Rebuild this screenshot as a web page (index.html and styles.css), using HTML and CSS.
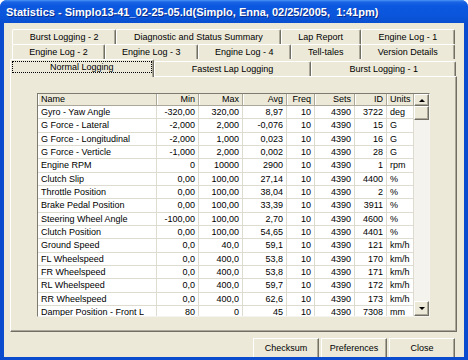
FILE: index.html
```html
<!DOCTYPE html>
<html>
<head>
    <meta charset="utf-8">
    <title>Statistics</title>
    <link rel="stylesheet" href="styles.css">
</head>
<body>
    <div class="window">
        <div class="titlebar">Statistics - Simplo13-41_02-25-05.ld(Simplo, Enna, 02/25/2005,&nbsp; 1:41pm)</div>

        <div class="client">
            <div class="tabs">
                <div class="tab-row back">
                    <div class="tab">Burst Logging - 2</div>
                    <div class="tab">Diagnostic and Status Summary</div>
                    <div class="tab">Lap Report</div>
                    <div class="tab">Engine Log - 1</div>
                </div>
                <div class="tab-row back">
                    <div class="tab">Engine Log - 2</div>
                    <div class="tab">Engine Log - 3</div>
                    <div class="tab">Engine Log - 4</div>
                    <div class="tab">Tell-tales</div>
                    <div class="tab">Version Details</div>
                </div>
                <div class="tab-row front">
                    <div class="tab selected"><span class="focus">Normal Logging</span></div>
                    <div class="tab">Fastest Lap Logging</div>
                    <div class="tab">Burst Logging - 1</div>
                </div>
            </div>

            <div class="panel">
                <div class="listview">
                    <div class="list-area">
                        <table class="stats">
                            <colgroup>
                                <col class="c-name"><col class="c-min"><col class="c-max"><col class="c-avg">
                                <col class="c-freq"><col class="c-sets"><col class="c-id"><col class="c-units">
                            </colgroup>
                            <thead>
                                <tr>
                                    <th class="txt">Name</th><th>Min</th><th>Max</th><th>Avg</th>
                                    <th>Freq</th><th>Sets</th><th>ID</th><th class="txt">Units</th>
                                </tr>
                            </thead>
                            <tbody>
                                <tr><td class="txt">Gyro - Yaw Angle</td><td>-320,00</td><td>320,00</td><td>8,97</td><td>10</td><td>4390</td><td>3722</td><td class="txt">deg</td></tr>
                                <tr><td class="txt">G Force - Lateral</td><td>-2,000</td><td>2,000</td><td>-0,076</td><td>10</td><td>4390</td><td>15</td><td class="txt">G</td></tr>
                                <tr><td class="txt">G Force - Longitudinal</td><td>-2,000</td><td>1,000</td><td>0,023</td><td>10</td><td>4390</td><td>16</td><td class="txt">G</td></tr>
                                <tr><td class="txt">G Force - Verticle</td><td>-1,000</td><td>2,000</td><td>0,002</td><td>10</td><td>4390</td><td>28</td><td class="txt">G</td></tr>
                                <tr><td class="txt">Engine RPM</td><td>0</td><td>10000</td><td>2900</td><td>10</td><td>4390</td><td>1</td><td class="txt">rpm</td></tr>
                                <tr><td class="txt">Clutch Slip</td><td>0,00</td><td>100,00</td><td>27,14</td><td>10</td><td>4390</td><td>4400</td><td class="txt">%</td></tr>
                                <tr><td class="txt">Throttle Position</td><td>0,00</td><td>100,00</td><td>38,04</td><td>10</td><td>4390</td><td>2</td><td class="txt">%</td></tr>
                                <tr><td class="txt">Brake Pedal Position</td><td>0,00</td><td>100,00</td><td>33,39</td><td>10</td><td>4390</td><td>3911</td><td class="txt">%</td></tr>
                                <tr><td class="txt">Steering Wheel Angle</td><td>-100,00</td><td>100,00</td><td>2,70</td><td>10</td><td>4390</td><td>4600</td><td class="txt">%</td></tr>
                                <tr><td class="txt">Clutch Position</td><td>0,00</td><td>100,00</td><td>54,65</td><td>10</td><td>4390</td><td>4401</td><td class="txt">%</td></tr>
                                <tr><td class="txt">Ground Speed</td><td>0,0</td><td>40,0</td><td>59,1</td><td>10</td><td>4390</td><td>121</td><td class="txt">km/h</td></tr>
                                <tr><td class="txt">FL Wheelspeed</td><td>0,0</td><td>400,0</td><td>53,8</td><td>10</td><td>4390</td><td>170</td><td class="txt">km/h</td></tr>
                                <tr><td class="txt">FR Wheelspeed</td><td>0,0</td><td>400,0</td><td>53,8</td><td>10</td><td>4390</td><td>171</td><td class="txt">km/h</td></tr>
                                <tr><td class="txt">RL Wheelspeed</td><td>0,0</td><td>400,0</td><td>59,7</td><td>10</td><td>4390</td><td>172</td><td class="txt">km/h</td></tr>
                                <tr><td class="txt">RR Wheelspeed</td><td>0,0</td><td>400,0</td><td>62,6</td><td>10</td><td>4390</td><td>173</td><td class="txt">km/h</td></tr>
                                <tr><td class="txt">Damper Position - Front L</td><td>80</td><td>0</td><td>45</td><td>10</td><td>4390</td><td>7308</td><td class="txt">mm</td></tr>
                            </tbody>
                        </table>
                    </div>
                    <div class="vscroll">
                        <div class="sb-btn"><span class="arrow up"></span></div>
                        <div class="sb-thumb"></div>
                        <div class="sb-track"></div>
                        <div class="sb-btn down"><span class="arrow dn"></span></div>
                    </div>
                </div>
            </div>

            <div class="buttons">
                <button class="btn">Checksum</button>
                <button class="btn">Preferences</button>
                <button class="btn">Close</button>
            </div>
        </div>
    </div>
</body>
</html>
```

FILE: styles.css
```css
body {
    margin: 0;
    background-color: #ffffff;
    font-family: "Liberation Sans", Arial, sans-serif;
    font-size: 9px;
    color: #000;
}

.window {
    width: 468px;
    height: 360px;
    box-sizing: border-box;
    padding: 0 4px 3px 4px;
    background-color: #0b4ccf;
    border-radius: 7px 7px 0 0;
    display: flex;
    flex-direction: column;
    overflow: hidden;
}

.titlebar {
    margin: 0 -4px;
    height: 23px;
    line-height: 24px;
    padding-left: 6px;
    background: linear-gradient(#4a97f6 0px, #1a63e4 2px, #0b58e0 6px, #0a55db 16px, #0a4fcf 23px);
    color: #fff;
    font-weight: bold;
    font-size: 11px;
    white-space: nowrap;
    text-shadow: 1px 1px 0 #0a2a8a;
}

.client {
    flex: 1;
    background-color: #ece9d8;
    overflow: hidden;
}

/* tab strip */
.tabs {
    margin: 6px 7px 0 6px;
}

.tab-row {
    display: flex;
    height: 15px;
}

.tab-row.back {
    margin: 0 2px;
}

.tab-row.front {
    height: 17px;
    margin-right: 1px;
    position: relative;
    z-index: 1;
}

.tab {
    flex: 1 1 auto;
    box-sizing: border-box;
    height: 15px;
    border-top: 1px solid #fff;
    border-left: 1px solid #fff;
    border-right: 1px solid #716f64;
    box-shadow: inset -1px 0 #aca899;
    border-radius: 2px 2px 0 0;
    text-align: center;
    line-height: 14px;
    white-space: nowrap;
    background-color: #ece9d8;
}

.front .tab {
    margin-top: 2px;
}

.front .tab.selected {
    margin-top: 0;
    height: 18px;
    padding: 1px 1px 0 1px;
}

.focus {
    display: block;
    height: 12px;
    line-height: 11px;
    box-sizing: border-box;
    border: 1px dotted #000;
}

/* page */
.panel {
    height: 256px;
    margin: 0 7px 0 6px;
    box-sizing: border-box;
    border-top: 1px solid #fff;
    border-left: 1px solid #fff;
    border-right: 1px solid #716f64;
    border-bottom: 1px solid #716f64;
    box-shadow: inset -1px -1px #aca899;
    padding: 16px 0 0 26px;
}

.listview {
    width: 393px;
    height: 224px;
    box-sizing: border-box;
    border: 1px solid;
    border-color: #7d7b70 #f5f4ee #f5f4ee #7d7b70;
    display: flex;
    background-color: #fff;
}

.list-area {
    width: 376px;
    overflow: hidden;
}

.stats {
    width: 376px;
    table-layout: fixed;
    border-collapse: separate;
    border-spacing: 0;
}

.c-name { width: 119px; }
.c-min { width: 42px; }
.c-max { width: 44px; }
.c-avg { width: 44px; }
.c-freq { width: 28px; }
.c-sets { width: 40px; }
.c-id { width: 32px; }
.c-units { width: 27px; }

.stats th {
    height: 12px;
    padding: 0 3px 0 2px;
    box-sizing: border-box;
    font-weight: normal;
    text-align: right;
    line-height: 11px;
    background-color: #ece9d8;
    border-right: 1px solid #aca899;
    border-bottom: 1px solid #aca899;
    box-shadow: inset 1px 0 #fff;
    white-space: nowrap;
    overflow: hidden;
}

.stats tbody tr {
    height: 13.33px;
}

.stats td {
    padding: 0 3px 0 2px;
    text-align: right;
    line-height: 12px;
    border-right: 1px solid #dedbd0;
    border-bottom: 1px solid #dedbd0;
    white-space: nowrap;
    overflow: hidden;
}

.stats .txt {
    text-align: left;
    padding-left: 3px;
}

/* scrollbar */
.vscroll {
    width: 15px;
    display: flex;
    flex-direction: column;
    background-color: #f4f3ee;
}

.sb-btn, .sb-thumb {
    box-sizing: border-box;
    background-color: #ece9d8;
    border: 1px solid;
    border-color: #fff #716f64 #716f64 #fff;
    box-shadow: inset -1px -1px #aca899;
}

.sb-btn {
    height: 12px;
    display: flex;
    align-items: center;
    justify-content: center;
}

.sb-btn.down {
    height: 15px;
}

.sb-thumb {
    height: 14px;
}

.sb-track {
    flex: 1;
}

.arrow {
    width: 0;
    height: 0;
    border-left: 3px solid transparent;
    border-right: 3px solid transparent;
}

.arrow.up {
    border-bottom: 3px solid #000;
}

.arrow.dn {
    border-top: 3px solid #000;
}

/* dialog buttons */
.buttons {
    display: flex;
    justify-content: flex-end;
    gap: 2px;
    margin: 6px 9px 0 0;
}

.btn {
    width: 66px;
    height: 21px;
    padding: 0 0 1px 0;
    box-sizing: border-box;
    font-family: inherit;
    font-size: 9px;
    color: #000;
    background-color: #ece9d8;
    border: 1px solid;
    border-color: #fff #716f64 #716f64 #fff;
    box-shadow: inset -1px -1px #aca899;
}
```
